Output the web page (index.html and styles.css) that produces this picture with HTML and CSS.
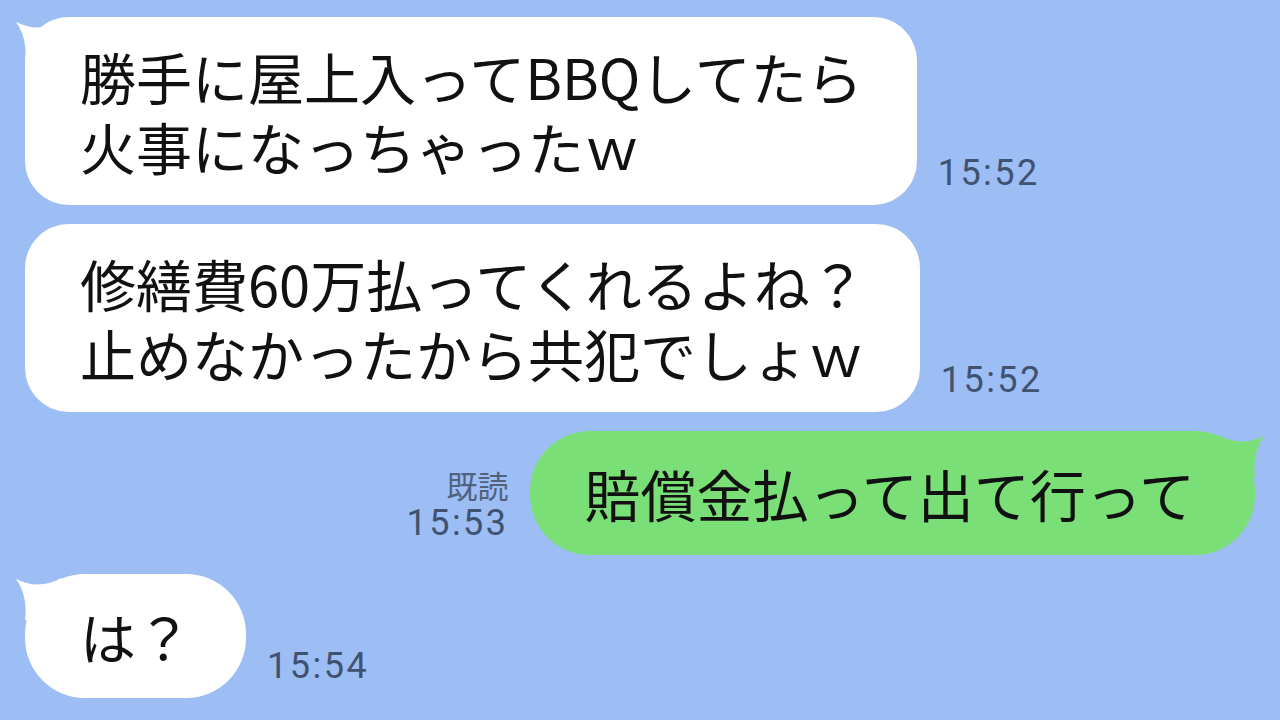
FILE: index.html
```html
<!DOCTYPE html>
<html lang="ja">
<head>
    <meta charset="UTF-8">
    <meta name="viewport" content="width=device-width, initial-scale=1.0">
    <title>トーク</title>
    <link rel="stylesheet" href="styles.css">
</head>
<body>
    <div class="chat">

        <div class="row left">
            <div class="bubble white">
                <svg class="tail" width="50" height="50" viewBox="0 0 50 50"><path d="M1 5 C15 12 30 13 46 4 L46 46 L10 46 C12 30 9 16 1 5 Z"/></svg>
                <p>勝手に屋上入ってBBQしてたら<br>火事になっちゃったｗ</p>
            </div>
            <div class="meta"><span class="time">15:52</span></div>
        </div>

        <div class="row left">
            <div class="bubble white">
                <p>修繕費60万払ってくれるよね？<br>止めなかったから共犯でしょｗ</p>
            </div>
            <div class="meta"><span class="time">15:52</span></div>
        </div>

        <div class="row right">
            <div class="meta">
                <span class="read">既読</span>
                <span class="time">15:53</span>
            </div>
            <div class="bubble green">
                <svg class="tail" width="50" height="50" viewBox="0 0 50 50"><path d="M49 5 C35 12 20 13 4 4 L4 46 L40 46 C38 30 41 16 49 5 Z"/></svg>
                <p>賠償金払って出て行って</p>
            </div>
        </div>

        <div class="row left">
            <div class="bubble white short">
                <svg class="tail" width="50" height="50" viewBox="0 0 50 50"><path d="M1 5 C15 12 30 13 46 4 L46 46 L10 46 C12 30 9 16 1 5 Z"/></svg>
                <p>は？</p>
            </div>
            <div class="meta"><span class="time">15:54</span></div>
        </div>

    </div>
</body>
</html>
```

FILE: styles.css
```css
body {
    margin: 0;
    background-color: #9dbdf5;
    font-family: "Noto Sans CJK JP", "Noto Sans", sans-serif;
    width: 1280px;
    height: 720px;
    overflow: hidden;
}

.chat {
    display: flex;
    flex-direction: column;
    gap: 19px;
    padding: 17px 25px 0 25px;
}

.row {
    display: flex;
    align-items: flex-end;
    gap: 21px;
}

.row.right {
    justify-content: flex-end;
}

.bubble {
    position: relative;
    border-radius: 44px;
    padding: 24px 54px 24px 55px;
}

.bubble p {
    position: relative;
    margin: 0;
    font-size: 56px;
    line-height: 70px;
    color: #111;
    white-space: nowrap;
}

.bubble.white {
    background-color: #fff;
}

.bubble.green {
    background-color: #7bdf78;
    border-radius: 60px;
    padding: 27px 60px 27px 55px;
}

.bubble.short {
    border-radius: 60px;
    padding: 27px 54px 27px 55px;
}

.tail {
    position: absolute;
    top: 0;
    fill: #fff;
}

.bubble.white .tail {
    left: -10px;
}

.bubble.green .tail {
    right: -10px;
    fill: #7bdf78;
}

.meta {
    display: flex;
    flex-direction: column;
    align-items: flex-end;
    margin-bottom: 14px;
    color: #3f5270;
    font-family: Roboto, "Noto Sans CJK JP", sans-serif;
}

.time {
    font-size: 36px;
    line-height: 36px;
    letter-spacing: 2.5px;
}

.read {
    font-size: 31px;
    line-height: 40px;
    font-family: "Noto Sans CJK JP", sans-serif;
    color: #51637c;
}
```
